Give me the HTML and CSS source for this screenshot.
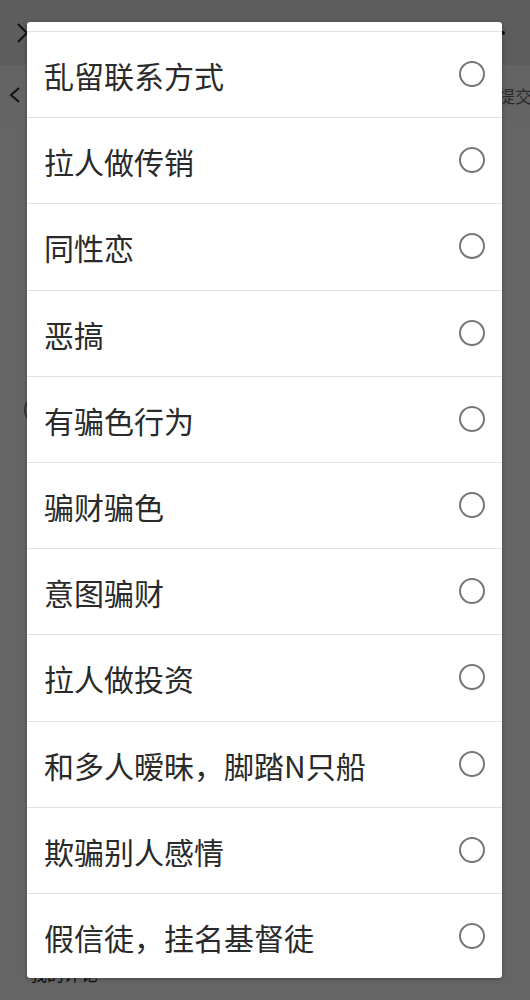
FILE: index.html
```html
<!DOCTYPE html>
<html lang="zh-CN">

<head>
    <meta charset="UTF-8">
    <meta name="viewport" content="width=device-width, initial-scale=1.0">
    <title>举报</title>
    <link rel="stylesheet" href="styles.css">
</head>

<body>
    <div class="page">
        <div class="top-bar">
            <svg class="close-icon" width="22" height="22" viewBox="0 0 22 22">
                <path d="M2 2 L20 20 M20 2 L2 20" stroke="#111" stroke-width="2" fill="none" />
            </svg>
            <span class="more-dot"></span>
        </div>
        <div class="nav-bar">
            <svg class="back-icon" width="14" height="18" viewBox="0 0 14 18">
                <path d="M11 2 L3 9 L11 16" stroke="#111" stroke-width="2" fill="none" />
            </svg>
            <span class="submit">提交</span>
        </div>
        <div class="content">
            <span class="peek-circle"></span>
        </div>
        <div class="bottom-text">我的评论</div>

        <!-- overlay dialog with the reason list -->
        <div class="dialog">
            <ul class="reason-list">
                <li class="reason-item partial"></li>
                <li class="reason-item"><span class="reason-name">乱留联系方式</span><span class="radio"></span></li>
                <li class="reason-item"><span class="reason-name">拉人做传销</span><span class="radio"></span></li>
                <li class="reason-item"><span class="reason-name">同性恋</span><span class="radio"></span></li>
                <li class="reason-item"><span class="reason-name">恶搞</span><span class="radio"></span></li>
                <li class="reason-item"><span class="reason-name">有骗色行为</span><span class="radio"></span></li>
                <li class="reason-item"><span class="reason-name">骗财骗色</span><span class="radio"></span></li>
                <li class="reason-item"><span class="reason-name">意图骗财</span><span class="radio"></span></li>
                <li class="reason-item"><span class="reason-name">拉人做投资</span><span class="radio"></span></li>
                <li class="reason-item"><span class="reason-name">和多人暧昧，脚踏N只船</span><span class="radio"></span></li>
                <li class="reason-item"><span class="reason-name">欺骗别人感情</span><span class="radio"></span></li>
                <li class="reason-item"><span class="reason-name">假信徒，挂名基督徒</span><span class="radio"></span></li>
            </ul>
        </div>
    </div>
</body>

</html>
```

FILE: styles.css
```css
body {
    margin: 0;
    font-family: "Noto Sans CJK SC", "Noto Sans", sans-serif;
    background-color: #656565;
    overflow: hidden;
}

.page {
    position: relative;
    width: 530px;
    height: 1000px;
}

.top-bar {
    height: 65px;
    background-color: #5d5d5d;
    display: flex;
    align-items: center;
    justify-content: space-between;
    padding: 0 16px;
    box-sizing: border-box;
}

.close-icon {
    margin-top: 0;
}

.more-dot {
    width: 4px;
    height: 4px;
    border-radius: 50%;
    background-color: #111;
    margin-right: 9px;
}

.nav-bar {
    height: 60px;
    display: flex;
    align-items: center;
    justify-content: space-between;
    padding: 0 0 0 8px;
    background-color: #646464;
}

.back-icon {
    margin-top: -1px;
}

.submit {
    font-size: 17px;
    color: #2a2a2a;
    margin-right: -2px;
}

.content {
    height: 800px;
    position: relative;
}

.peek-circle {
    position: absolute;
    left: 24px;
    top: 271px;
    width: 24px;
    height: 24px;
    border-radius: 50%;
    border: 2px solid #333;
}

.bottom-text {
    position: absolute;
    left: 30px;
    top: 961px;
    font-size: 17px;
    color: #111;
}

.dialog {
    position: absolute;
    left: 27px;
    top: 22px;
    width: 475px;
    height: 956px;
    background-color: #fff;
    border-radius: 3px;
    overflow: hidden;
    box-shadow: 0 1px 4px rgba(0, 0, 0, 0.3);
}

.reason-list {
    list-style-type: none;
    margin: 0;
    padding: 0;
}

.reason-item {
    display: flex;
    align-items: center;
    justify-content: space-between;
    height: 86.2px;
    box-sizing: border-box;
    border-bottom: 1px solid #e2e2e2;
    padding: 0 17px 0 17px;
}

.reason-item.partial {
    height: 10px;
}

.reason-name {
    font-size: 30px;
    color: #2a2a2a;
    line-height: 1;
    margin-top: 1px;
}

.radio {
    width: 26px;
    height: 26px;
    border-radius: 50%;
    border: 2px solid #777;
    box-sizing: border-box;
    margin-top: -1px;
}
```
